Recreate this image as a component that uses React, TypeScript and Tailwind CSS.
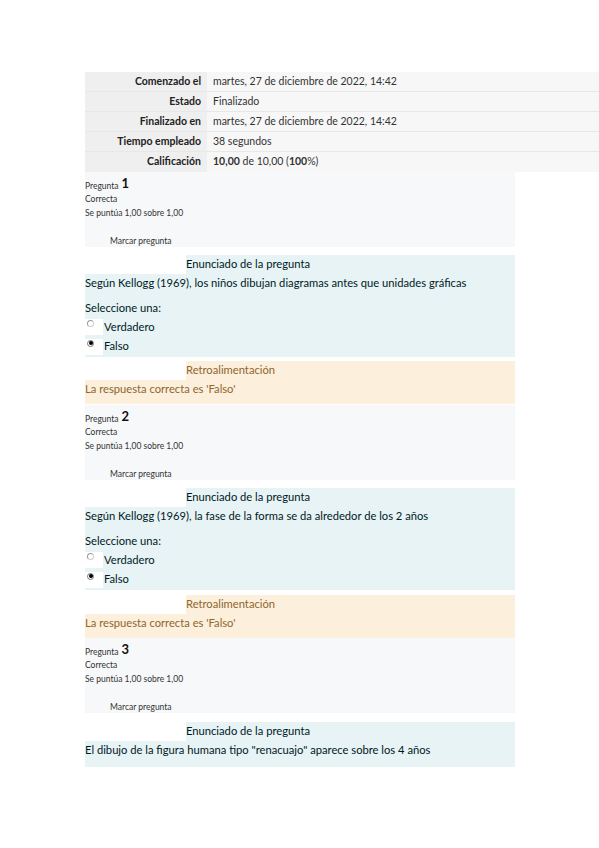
const font = { fontFamily: "Lato, 'Open Sans', sans-serif" };

const rows: [string, React.ReactNode][] = [
  ["Comenzado el", "martes, 27 de diciembre de 2022, 14:42"],
  ["Estado", "Finalizado"],
  ["Finalizado en", "martes, 27 de diciembre de 2022, 14:42"],
  ["Tiempo empleado", "38 segundos"],
  [
    "Calificación",
    <span>
      <b>10,00</b> de 10,00 (<b>100</b>%)
    </span>,
  ],
];

function Radio({ checked }: { checked: boolean }) {
  return (
    <span className="w-[18px] h-[16px] bg-white flex items-start justify-start pl-[2px] pt-[1px] mr-[1px]">
      <span
        className={`w-[7px] h-[7px] rounded-full border flex items-center justify-center ${
          checked ? "border-[#777] bg-white" : "border-[#ccc] border-t-[#999] border-l-[#999] bg-white"
        }`}
      >
        {checked && <span className="w-[4px] h-[4px] rounded-full bg-black" />}
      </span>
    </span>
  );
}

function Info({ n }: { n: number }) {
  return (
    <div className="w-[430px] h-[75px] bg-[#f7f8f9] text-[8.5px] text-[#333] leading-none pt-[6px]">
      <div className="flex items-end h-[12px]">
        Pregunta <span className="ml-[3px] text-[13px] font-bold text-[#111]">{n}</span>
      </div>
      <div className="mt-[5px]">Correcta</div>
      <div className="mt-[5px]">Se puntúa 1,00 sobre 1,00</div>
      <div className="mt-[20px] ml-[25px]">Marcar pregunta</div>
    </div>
  );
}

function Question({
  text,
  options,
  checked,
}: {
  text: string;
  options?: boolean;
  checked?: number;
}) {
  return (
    <div className="w-[430px] bg-[#e7f3f5] text-[#001a1e] text-[11.2px]">
      <div className="flex h-[19px]">
        <div className="w-[101px] bg-white" />
        <div className="flex-1 flex items-center">Enunciado de la pregunta</div>
      </div>
      <div className="h-[18px] flex items-center">{text}</div>
      {options ? (
        <div className="pb-[1px]">
          <div className="mt-[7px] h-[18px] flex items-center">Seleccione una:</div>
          <div className="h-[20px] flex items-center">
            <Radio checked={checked === 0} />
            Verdadero
          </div>
          <div className="h-[19px] flex items-center">
            <Radio checked={checked === 1} />
            Falso
          </div>
        </div>
      ) : (
        <div className="h-[8px]" />
      )}
    </div>
  );
}

function Feedback() {
  return (
    <div className="w-[430px] h-[43px] bg-[#fcefdc] text-[#8e662e] text-[11.2px]">
      <div className="flex h-[19px]">
        <div className="w-[101px] bg-white" />
        <div className="flex-1 flex items-center">Retroalimentación</div>
      </div>
      <div className="h-[18px] flex items-center">La respuesta correcta es 'Falso'</div>
    </div>
  );
}

export default function App() {
  return (
    <div className="w-[599px] h-[848px] bg-white overflow-hidden" style={font}>
      <div className="pt-[72px] pl-[85px]">
        <div className="text-[10.5px] text-[#333]">
          {rows.map(([k, v], i) => (
            <div key={i} className="flex h-[20px] border-b border-[#e8e8e8] last:border-b-0">
              <div className="w-[122px] bg-[#efefef] flex items-center justify-end pr-[6px] font-bold text-[#222]">
                {k}
              </div>
              <div className="flex-1 bg-[#f7f7f7] flex items-center pl-[6px]">{v}</div>
            </div>
          ))}
        </div>

        <Info n={1} />
        <div className="h-[8px]" />
        <Question
          text="Según Kellogg (1969), los niños dibujan diagramas antes que unidades gráficas"
          options
          checked={1}
        />
        <div className="h-[4px]" />
        <Feedback />
        <div className="h-[1px]" />
        <Info n={2} />
        <div className="h-[8px]" />
        <Question
          text="Según Kellogg (1969), la fase de la forma se da alrededor de los 2 años"
          options
          checked={1}
        />
        <div className="h-[5px]" />
        <Feedback />
        <Info n={3} />
        <div className="h-[9px]" />
        <Question text='El dibujo de la figura humana tipo "renacuajo" aparece sobre los 4 años' />
      </div>
    </div>
  );
}
